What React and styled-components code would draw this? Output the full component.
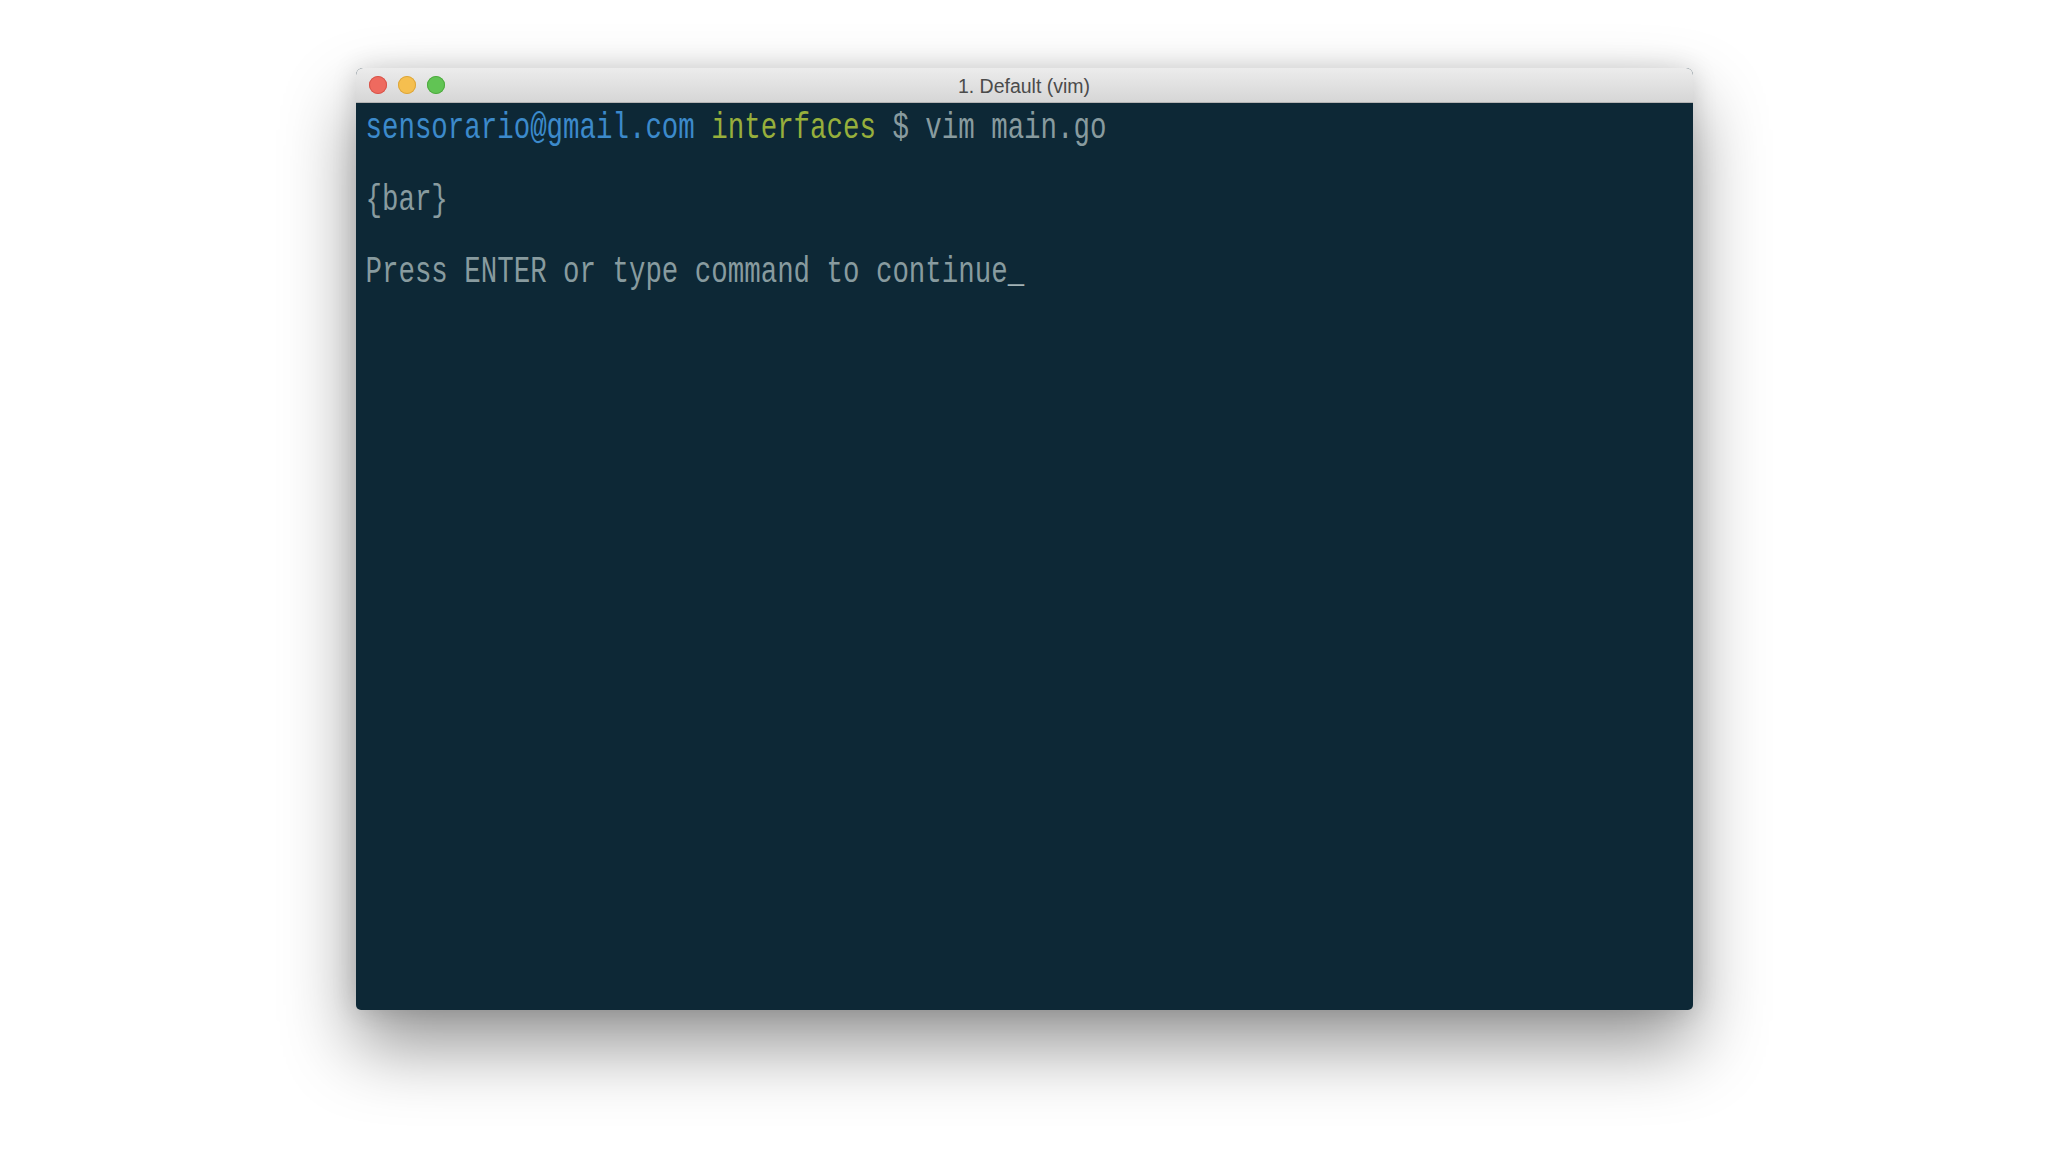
import React from "react";
import styled, { createGlobalStyle } from "styled-components";

const GlobalStyle = createGlobalStyle`
  html, body {
    margin: 0;
    padding: 0;
    background: #ffffff;
  }
  body {
    font-family: "Liberation Sans", Arial, sans-serif;
  }
`;

const Page = styled.div`
  width: 2048px;
  height: 1152px;
  display: flex;
  justify-content: center;
  align-items: flex-start;
  padding-top: 68px;
  box-sizing: border-box;
  background: #ffffff;
  overflow: hidden;
`;

const Window = styled.div`
  width: 1337px;
  height: 942px;
  display: flex;
  flex-direction: column;
  border-radius: 7px 7px 5px 5px;
  overflow: hidden;
  background: #0d2836;
  box-shadow: 0 36px 72px rgba(0, 0, 0, 0.42), 0 0 26px rgba(0, 0, 0, 0.14);
`;

const TitleBar = styled.div`
  position: relative;
  height: 35px;
  flex: none;
  display: flex;
  align-items: center;
  gap: 11px;
  padding-left: 13px;
  box-sizing: border-box;
  background: linear-gradient(#ececec, #d6d6d6);
  border-bottom: 1px solid #b4b4b4;
`;

const Light = styled.span`
  width: 18px;
  height: 18px;
  border-radius: 50%;
  background: ${(p) => p.$color};
  box-shadow: inset 0 0 0 1px ${(p) => p.$edge};
  flex: none;
`;

const Title = styled.div`
  position: absolute;
  left: 0;
  right: 0;
  top: 2px;
  bottom: 0;
  display: flex;
  align-items: center;
  justify-content: center;
  font-family: "Liberation Sans", Arial, sans-serif;
  font-size: 19.5px;
  color: #4b4b4b;
  pointer-events: none;
`;

const Body = styled.div`
  flex: 1;
  padding: 10px 0 0 10px;
  display: flex;
  flex-direction: column;
`;

const Line = styled.div`
  height: 36px;
  line-height: 36px;
  font-family: "Liberation Mono", "DejaVu Sans Mono", monospace;
  font-size: 27.45px;
  white-space: pre;
  color: #889b9f;
  transform: scaleY(1.36);
  transform-origin: 0 25.5px;
`;

const Tok = styled.span`
  color: ${(p) => p.$color || "inherit"};
`;

const Cursor = styled.span`
  color: #a3b3b6;
`;

export default function App() {
  return (
    <>
      <GlobalStyle />
      <Page>
        <Window>
          <TitleBar>
            <Light $color="#ee6a5f" $edge="#d6544a" />
            <Light $color="#f5bf4f" $edge="#dba53b" />
            <Light $color="#61c454" $edge="#4ea93f" />
            <Title>1. Default (vim)</Title>
          </TitleBar>
          <Body>
            <Line>
              <Tok $color="#3c8acb">sensorario@gmail.com</Tok>{" "}
              <Tok $color="#97af3c">interfaces</Tok> $ vim main.go
            </Line>
            <Line />
            <Line>{"{bar}"}</Line>
            <Line />
            <Line>
              Press ENTER or type command to continue<Cursor>_</Cursor>
            </Line>
          </Body>
        </Window>
      </Page>
    </>
  );
}
